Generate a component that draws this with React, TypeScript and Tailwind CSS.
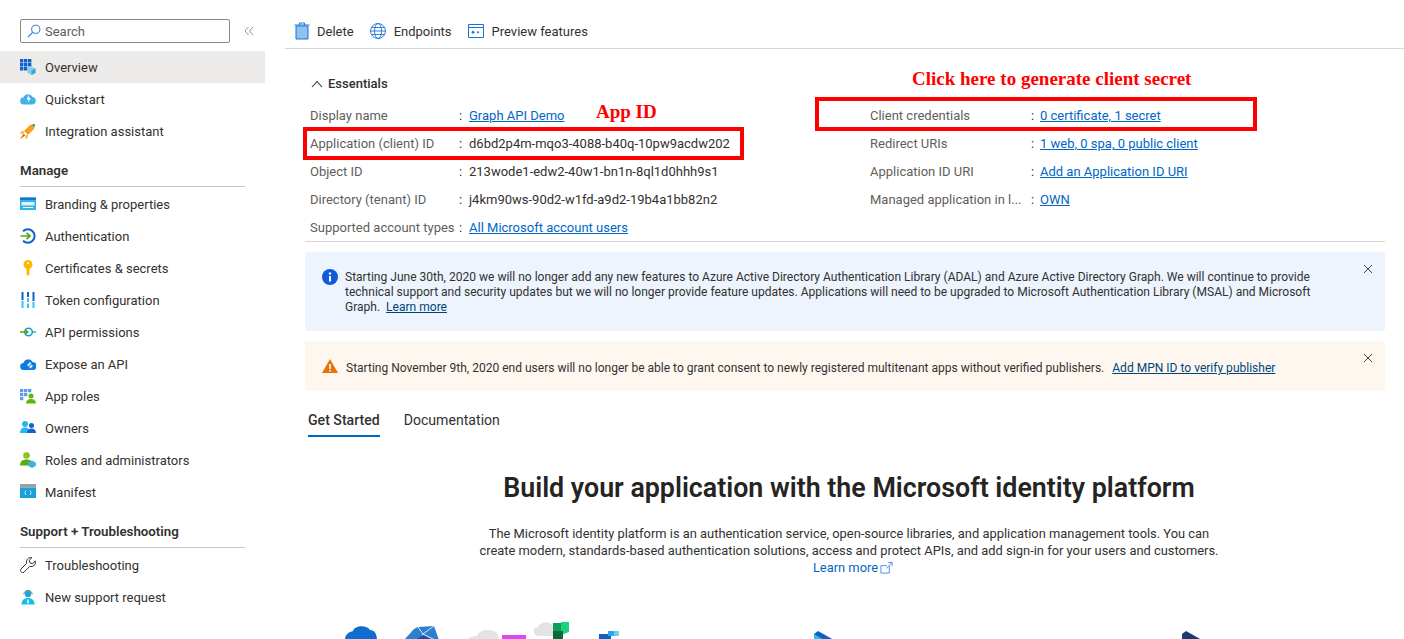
import React from "react";

const S = ({ children, className = "w-4 h-4" }: { children: React.ReactNode; className?: string }) => (
  <svg viewBox="0 0 16 16" className={className + " shrink-0"}>{children}</svg>
);

const I: Record<string, React.ReactNode> = {
  overview: (
    <S>
      <path d="M0 0h3.400v3.400H0zM4 0h3.400v3.400H4zM8 0h3.400v3.400H8zM0 4h3.400v3.400H0zM4 4h3.400v3.400H4zM8 4h3.400v3.400H8zM0 8h3.400v3.400H0zM4 8h3.400v3.400H4z" fill="#0f62c9" />
      <path d="M11.500 7.500l4 2v4.500l-4 2-4-2V9.500z" fill="#7fd0ee" />
      <path d="M11.500 11.500l4-2v4.500l-4 2z" fill="#3ea7d8" />
    </S>
  ),
  quick: (
    <S>
      <path d="M4 13.500a3.500 3.500 0 0 1-.6-7A5 5 0 0 1 12.600 6a3.800 3.800 0 0 1 0 7.500z" fill="#3fb2e8" />
      <path d="M9 3.500L6.500 8.500h2.200L7.500 12l3.500-5H9z" fill="#fff" />
    </S>
  ),
  rocket: (
    <S>
      <path d="M15 1l-1 5-6 6-4-4 6-6z" fill="#f59f1c" />
      <path d="M15 1l-.6 3L12 1.600z" fill="#1f8ad6" />
      <path d="M4 8L1 8.500 0 11l4-.8zM8 12l-.5 3L5 16l.8-4z" fill="#f7b733" />
      <path d="M3.500 10.500L0 16l5.500-3.500z" fill="#e8710a" />
    </S>
  ),
  branding: (
    <S>
      <path d="M0 1.500h16v12.500H0z" fill="#31b5e8" />
      <path d="M0 1.500h16v2.500H0z" fill="#1578cf" />
      <path d="M1.500 6h13v3.500h-13z" fill="#d9f3fc" />
      <path d="M3 11h10v1H3z" fill="#fff" />
    </S>
  ),
  auth: (
    <S>
      <path d="M3 3.200A6.800 6.800 0 1 1 3 12.800" fill="none" stroke="#0f62c9" strokeWidth="2" />
      <path d="M0.500 8h9M6.500 4.800L10 8l-3.500 3.200" fill="none" stroke="#55a80f" strokeWidth="1.700" />
    </S>
  ),
  key: (
    <S>
      <circle cx="8" cy="4.500" r="4.500" fill="#fcb900" />
      <path d="M6.500 8h3v6L8 16l-1.500-2z" fill="#fcb900" />
      <circle cx="8" cy="3" r="1" fill="#fff" />
    </S>
  ),
  token: (
    <S>
      <path d="M1.500 0h2v8h-2zM7 0h2v5H7zM12.500 0h2v9h-2z" fill="#0f62c9" />
      <path d="M1.500 9h2v7h-2zM7 6h2v4H7zM7 11.500h2V16H7zM12.500 10h2v6h-2z" fill="#33c3ee" />
    </S>
  ),
  api: (
    <S>
      <circle cx="8.500" cy="8" r="3.800" fill="none" stroke="#1a9bc9" strokeWidth="1.500" />
      <path d="M0 8h8M5.500 6L8 8l-2.500 2" fill="none" stroke="#55a80f" strokeWidth="1.300" />
      <path d="M12.500 8H16" stroke="#1a9bc9" strokeWidth="1.300" />
    </S>
  ),
  expose: (
    <S>
      <path d="M4 14a3.500 3.500 0 0 1-.6-7A5 5 0 0 1 12.600 6a4 4 0 0 1 0 8z" fill="#0f7bdc" />
      <path d="M7 9l3-3 1.500 1.500-3 3zM9 11l2.500-2.500L13 10l-2.500 2.500z" fill="#d4eefb" />
    </S>
  ),
  roles: (
    <S>
      <path d="M0 1h3.300v3.300H0zM4 1h3.300v3.300H4zM8 1h3.300v3.300H8zM0 5h3.300v3.300H0zM4 5h3.300v3.300H4zM0 9h3.300v3.300H0z" fill="#5c9bf0" />
      <circle cx="11" cy="8" r="2.500" fill="#5db60c" />
      <path d="M6 15.500c0-3 2-4.500 5-4.500s5 1.500 5 4.500z" fill="#5db60c" />
    </S>
  ),
  owners: (
    <S>
      <circle cx="5" cy="4" r="3" fill="#2bb5ea" />
      <path d="M0 13c0-3.500 2-5.500 5-5.500s5 2 5 5.500z" fill="#2bb5ea" />
      <circle cx="11.500" cy="5.500" r="2.500" fill="#0f62c9" />
      <path d="M7 13c0-3 2-4.500 4.500-4.500S16 10 16 13z" fill="#0f62c9" />
    </S>
  ),
  admin: (
    <S>
      <circle cx="6.500" cy="3.500" r="3.300" fill="#86c51c" />
      <path d="M0 13.500c0-4 2.500-6 6.500-6s6.500 2 6.500 6z" fill="#5da80c" />
      <path d="M12 8.500l3.800 2v3.500L12 16l-3.800-2v-3.500z" fill="#36b4e5" />
    </S>
  ),
  manifest: (
    <S>
      <path d="M0 0h16v3.500H0z" fill="#9e9e9e" />
      <path d="M0 3.500h16V14H0z" fill="#1ba1d8" />
      <path d="M6 6.500L4.800 8.700 6 11M10 6.500l1.200 2.200L10 11" fill="none" stroke="#d7f0fa" strokeWidth=".9" />
    </S>
  ),
  wrench: (
    <S>
      <path d="M10.800.6a4.300 4.300 0 0 0-4.100 5.700L.9 12.100a1.800 1.800 0 0 0 0 2.500l.6.600a1.800 1.800 0 0 0 2.500 0l5.800-5.800a4.300 4.300 0 0 0 5.500-5.300l-2.600 2.500-2.700-.7-.7-2.700L11.900.7a4.300 4.300 0 0 0-1.100-.1z" fill="none" stroke="#333" strokeWidth="1" />
    </S>
  ),
  support: (
    <S>
      <circle cx="8" cy="5" r="3.200" fill="#1aa7dc" />
      <path d="M3.800 5.500a4.200 4.200 0 0 1 8.400 0" fill="none" stroke="#666" strokeWidth=".8" />
      <path d="M1.500 15.500c0-4 2.500-6.500 6.500-6.500s6.500 2.500 6.500 6.500z" fill="#12bde6" />
      <path d="M8 9.500l1 3-1 3-1-3z" fill="#fff" />
    </S>
  ),
};

const Nav = ({ icon, label, active }: { icon: string; label: string; active?: boolean }) => (
  <div className={"flex h-8 items-center gap-[9px] pl-5 " + (active ? "bg-[#edebe9]" : "")}>
    {I[icon]}
    <span className="pt-[2px]">{label}</span>
  </div>
);

const Section = ({ label }: { label: string }) => (
  <div className="ml-5 mt-2 mb-px flex h-8 w-[225px] items-center border-b border-[#c8c6c4] text-[13.3px] font-semibold">{label}</div>
);

const Link = ({ children, className = "text-[#0067c5]" }: { children: React.ReactNode; className?: string }) => (
  <a className={"underline " + className}>{children}</a>
);

const Row = ({ label, children, w, colon = "w-[10px]" }: { label: string; children: React.ReactNode; w: string; colon?: string }) => (
  <div className="flex h-7 items-center whitespace-nowrap pt-[2px]">
    <span className={"shrink-0 truncate text-[#605e5c] " + w}>{label}</span>
    <span className={"shrink-0 " + colon}>:</span>
    <span>{children}</span>
  </div>
);

const Close = () => (
  <svg viewBox="0 0 10 10" className="h-[10px] w-[10px] shrink-0">
    <path d="M1 1l8 8M9 1l-8 8" stroke="#444" strokeWidth="1" />
  </svg>
);

export default function App() {
  return (
    <div className="flex h-[639px] w-[1404px] overflow-hidden bg-white font-['Roboto',sans-serif] text-[13px] text-[#323130]">
      <aside className="w-[265px] shrink-0 pt-[19px]">
        <div className="mb-2 flex items-center">
          <div className="ml-5 flex h-6 w-[210px] items-center gap-[4px] rounded-[2px] border border-[#8a8886] pl-[6px] text-[#605e5c]">
            <svg viewBox="0 0 16 16" className="h-[14px] w-[14px]">
              <circle cx="10" cy="6" r="4.700" fill="none" stroke="#1a73d9" strokeWidth="1.100" />
              <path d="M6.500 9.500L1 15" stroke="#1a73d9" strokeWidth="1.200" />
            </svg>
            <span className="pt-[2px]">Search</span>
          </div>
          <svg viewBox="0 0 10 10" className="ml-[14px] h-[10px] w-[10px]">
            <path d="M4.500 1L1 5l3.500 4M9 1L5.500 5 9 9" fill="none" stroke="#8a8886" strokeWidth=".9" />
          </svg>
        </div>
        <Nav icon="overview" label="Overview" active />
        <Nav icon="quick" label="Quickstart" />
        <Nav icon="rocket" label="Integration assistant" />
        <Section label="Manage" />
        <Nav icon="branding" label="Branding & properties" />
        <Nav icon="auth" label="Authentication" />
        <Nav icon="key" label="Certificates & secrets" />
        <Nav icon="token" label="Token configuration" />
        <Nav icon="api" label="API permissions" />
        <Nav icon="expose" label="Expose an API" />
        <Nav icon="roles" label="App roles" />
        <Nav icon="owners" label="Owners" />
        <Nav icon="admin" label="Roles and administrators" />
        <Nav icon="manifest" label="Manifest" />
        <Section label="Support + Troubleshooting" />
        <Nav icon="wrench" label="Troubleshooting" />
        <Nav icon="support" label="New support request" />
      </aside>

      <main className="relative ml-5 min-w-0 flex-1">
        <div className="flex h-[49px] items-center gap-[16px] border-b border-[#d6d6d6] pl-[9px] pt-[14px]">
          <span className="flex items-center gap-[7px]">
            <svg viewBox="0 0 16 18" className="h-[18px] w-4">
              <path d="M2 4h12v13H2z" fill="#8ec3f0" stroke="#1a73d9" strokeWidth="1" />
              <path d="M0.500 3h15M5.500 3V1h5v2" fill="none" stroke="#1a73d9" strokeWidth="1" />
            </svg>
            <span className="pt-[2px]">Delete</span>
          </span>
          <span className="flex items-center gap-[8px]">
            <svg viewBox="0 0 16 16" className="h-4 w-4">
              <g fill="none" stroke="#1a73d9" strokeWidth=".9">
                <circle cx="8" cy="8" r="7.500" />
                <ellipse cx="8" cy="8" rx="3.500" ry="7.500" />
                <path d="M.5 8h15M1.500 4.500h13M1.500 11.500h13" />
              </g>
            </svg>
            <span className="pt-[2px]">Endpoints</span>
          </span>
          <span className="flex items-center gap-[8px]">
            <svg viewBox="0 0 16 14" className="h-[14px] w-4">
              <path d="M.5.5h15v13H.5z" fill="none" stroke="#1a73d9" />
              <path d="M.5 3.500h15" stroke="#1a73d9" />
              <path d="M5 6.500l1.800 1.800L5 10 3.200 8.300zM10 7l1.300 1.300L10 9.600 8.700 8.300z" fill="#1a73d9" />
            </svg>
            <span className="pt-[2px]">Preview features</span>
          </span>
        </div>

        <div className="pl-5 pr-[19px]">
          <div className="flex h-[52px] items-center gap-[5px] pl-[6px] pt-[17px] font-medium">
            <svg viewBox="0 0 12 8" className="h-2 w-3">
              <path d="M1 7l5-5.500L11 7" fill="none" stroke="#323130" strokeWidth="1.100" />
            </svg>
            Essentials
          </div>
          <div className="flex h-[141px] border-b border-[#d6d6d6] pl-[5px]">
            <div className="w-[560px]">
              <Row w="w-[149px]" label="Display name"><Link>Graph API Demo</Link></Row>
              <Row w="w-[149px]" label="Application (client) ID">d6bd2p4m-mqo3-4088-b40q-10pw9acdw202</Row>
              <Row w="w-[149px]" label="Object ID">213wode1-edw2-40w1-bn1n-8ql1d0hhh9s1</Row>
              <Row w="w-[149px]" label="Directory (tenant) ID">j4km90ws-90d2-w1fd-a9d2-19b4a1bb82n2</Row>
              <Row w="w-[149px]" label="Supported account types"><Link>All Microsoft account users</Link></Row>
            </div>
            <div>
              <Row w="w-[161px]" colon="w-[9px]" label="Client credentials"><Link>0 certificate, 1 secret</Link></Row>
              <Row w="w-[161px]" colon="w-[9px]" label="Redirect URIs"><Link>1 web, 0 spa, 0 public client</Link></Row>
              <Row w="w-[161px]" colon="w-[9px]" label="Application ID URI"><Link>Add an Application ID URI</Link></Row>
              <Row w="w-[161px]" colon="w-[9px]" label="Managed application in l...">
                <Link>OWN</Link>
              </Row>
            </div>
          </div>

          <div className="mt-[10px] flex h-[79px] gap-[7px] rounded-[2px] bg-[#edf4fe] pl-[17px] pr-[12px] pt-[17px] text-[12.04px] leading-[15px]">
            <svg viewBox="0 0 16 16" className="h-4 w-4 shrink-0">
              <circle cx="8" cy="8" r="8" fill="#0f5bd9" />
              <path d="M7 7h2v5.500H7z" fill="#fff" />
              <circle cx="8" cy="4.500" r="1.200" fill="#fff" />
            </svg>
            <p className="min-w-0 flex-1 pt-px">
              Starting June 30th, 2020 we will no longer add any new features to Azure Active Directory Authentication Library (ADAL) and Azure Active Directory Graph. We will continue to provide technical support and security updates but we will no longer provide feature updates. Applications will need to be upgraded to Microsoft Authentication Library (MSAL) and Microsoft Graph.&nbsp; <Link className="text-[#004578]">Learn more</Link>
            </p>
            <span className="-mt-[5px] ml-[40px]"><Close /></span>
          </div>

          <div className="mt-[10px] flex h-[50px] items-center gap-[8px] rounded-[2px] bg-[#fef7f0] pl-[17px] pr-[12px] text-[12.04px]">
            <svg viewBox="0 0 16 14" className="h-[14px] w-4 shrink-0">
              <path d="M8 0l8 14H0z" fill="#e8710a" />
              <path d="M7.200 5h1.600v5H7.200zM7.200 11h1.600v1.500H7.200z" fill="#fff" />
            </svg>
            <span className="flex-1 pt-[4px]">
              Starting November 9th, 2020 end users will no longer be able to grant consent to newly registered multitenant apps without verified publishers.&nbsp; <Link className="ml-[2px] text-[#004578]">Add MPN ID to verify publisher</Link>
            </span>
            <span className="-mt-[16px]"><Close /></span>
          </div>

          <div className="mt-[14px] flex h-[32px] items-center gap-[24px] pl-[3px] text-[14.1px]">
            <span className="flex h-full flex-col justify-center border-b-2 border-[#0067c5] pt-[2px] font-medium">Get Started</span>
            <span>Documentation</span>
          </div>

          <div className="pl-2">
            <h1 className="mt-[33px] text-center text-[26.8px] leading-[36px] font-semibold text-[#252423]">Build your application with the Microsoft identity platform</h1>
            <p className="mx-auto mt-[19px] w-[745px] text-center text-[12.9px] leading-[17px]">
              The Microsoft identity platform is an authentication service, open-source libraries, and application management tools. You can create modern, standards-based authentication solutions, access and protect APIs, and add sign-in for your users and customers.{" "}
              <span className="ml-2 inline-flex items-center gap-[2px] text-[#0067c5]">
                Learn more
                <svg viewBox="0 0 14 14" className="h-[13px] w-[13px]">
                  <path d="M10 5.500V13H1V5h6.500M7 8l6-6.500M9 1.500h4v4" fill="none" stroke="#4a86e8" strokeWidth="1" />
                </svg>
              </span>
            </p>
          </div>

          <div className="mt-[44px] h-5">
            <svg viewBox="0 0 1080 20" className="h-5 w-[1080px]">
              <path d="M40 20c0-6 4-8 8-9 2-6 14-6 17-1 5 0 7 5 7 10z" fill="#0f6cd0" />
              <path d="M99 20l10-11 4-2 16-1 5 14z" fill="#2f7fd1" />
              <path d="M113 7l5 7 11-8M118 14l-3 6M118 14l12 6" fill="none" stroke="#fff" strokeWidth=".8" />
              <path d="M110 20l8-5 9 5z" fill="#1f4e9c" />
              <path d="M162 20c2-3 6-4 10-4 2-7 14-8 20-3l3 7z" fill="#e3e3e3" />
              <path d="M197 15h24v5h-24z" fill="#dd48ee" />
              <path d="M234 16c-6 0-8-8-1-9 3-6 11-6 15-1v10z" fill="#e3e3e3" />
              <path d="M248 3h8v8h-8z" fill="#0f9d58" />
              <path d="M256 2h8v10l-8 3z" fill="#1fd07f" />
              <path d="M248 11h10v9h-10z" fill="#0a6b38" />
              <path d="M294 14h12v6h-12z" fill="#0e63c0" />
              <path d="M303 11h6v5h-6z" fill="#28a8ea" />
              <path d="M309 11h5v5h-5z" fill="#6fd0f5" />
              <path d="M509 14l4-3 16 9h-20z" fill="#0e63c0" />
              <path d="M509 14l10 6h-10z" fill="#28c0f5" />
              <path d="M877 14l4-3 16 9h-20z" fill="#1c3a70" />
            </svg>
          </div>
        </div>

        {/* Annotations drawn over the screenshot */}
        <div className="pointer-events-none absolute left-[18px] top-[127px] h-[33px] w-[441px] border-[4px] border-[#ff0000]" />
        <div className="pointer-events-none absolute left-[530px] top-[97px] h-[34px] w-[442px] border-[4px] border-[#ff0000]" />
        <span className="absolute left-[311px] top-[100px] font-['Liberation_Serif',serif] text-[19px] leading-[24px] font-bold text-[#ff0000]">App ID</span>
        <span className="absolute left-[627px] top-[67px] font-['Liberation_Serif',serif] text-[19px] leading-[24px] font-bold whitespace-nowrap text-[#ff0000]">Click here to generate client secret</span>
      </main>
    </div>
  );
}
